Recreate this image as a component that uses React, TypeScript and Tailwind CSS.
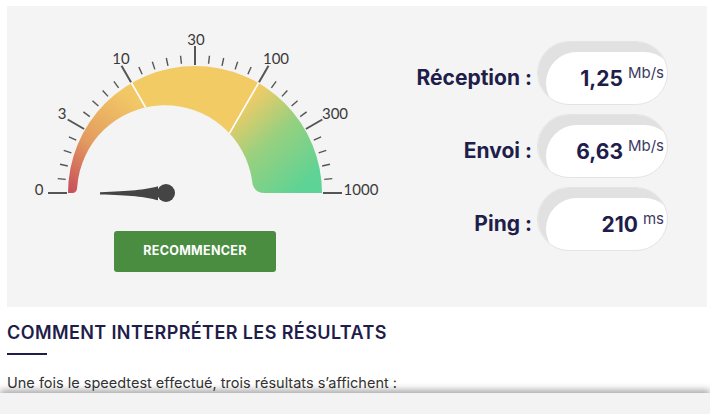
import React from "react";

const CX = 195;
const CY = 193;

const polar = (r: number, deg: number, cx = CX, cy = CY) => {
  const a = (deg * Math.PI) / 180;
  return [cx + r * Math.cos(a), cy - r * Math.sin(a)];
};

const wedge = (from: number, to: number) => {
  const [x1, y1] = polar(150, from);
  const [x2, y2] = polar(150, to);
  return `M ${CX} ${CY} L ${x1} ${y1} A 150 150 0 0 1 ${x2} ${y2} Z`;
};

const labels = [
  { t: "0", x: 39, y: 189 },
  { t: "3", x: 62, y: 113 },
  { t: "10", x: 121, y: 58 },
  { t: "30", x: 196, y: 39 },
  { t: "100", x: 276, y: 58 },
  { t: "300", x: 335, y: 113 },
  { t: "1000", x: 361, y: 189 },
];

const Gauge = () => {
  const band =
    "M 68 193 A 127 127 0 0 1 322 193 L 265 193 Q 253 193 252.1 180.8 A 88 88 0 0 0 77.2 186.9 Q 77 193 72 193 Z";

  return (
    <svg width="390" height="215" viewBox="7 6 390 215" className="block">
      <defs>
        <clipPath id="band">
          <path d={band} />
        </clipPath>
        <linearGradient id="red" gradientUnits="userSpaceOnUse" x1="70" y1="190" x2="135" y2="100">
          <stop offset="0" stopColor="#c8525b" />
          <stop offset="0.45" stopColor="#e39c5f" />
          <stop offset="1" stopColor="#f2c866" />
        </linearGradient>
        <linearGradient id="green" gradientUnits="userSpaceOnUse" x1="235" y1="110" x2="305" y2="185">
          <stop offset="0" stopColor="#f1cb66" />
          <stop offset="0.45" stopColor="#98d07f" />
          <stop offset="1" stopColor="#5dd395" />
        </linearGradient>
      </defs>

      <g clipPath="url(#band)">
        <path d={wedge(180, 120)} fill="url(#red)" />
        <path d={wedge(120, 60)} fill="#f3cb65" />
        <path d={wedge(60, 0)} fill="url(#green)" />
        {[120, 60].map((d) => {
          const [x1, y1] = polar(60, d);
          const [x2, y2] = polar(140, d);
          return <line key={d} x1={x1} y1={y1} x2={x2} y2={y2} stroke="#ffffff" strokeWidth="1.6" />;
        })}
      </g>

      {/* ticks */}
      {Array.from({ length: 31 }).map((_, i) => {
        const d = 180 - i * 6;
        const major = i % 5 === 0;
        const [x1, y1] = polar(major ? 128 : 130, d);
        const [x2, y2] = polar(major ? 147 : 138, d);
        return (
          <line
            key={i}
            x1={x1}
            y1={y1}
            x2={x2}
            y2={y2}
            stroke="#555555"
            strokeWidth={major ? 2 : 1.4}
          />
        );
      })}

      {labels.map((l) => (
        <text
          key={l.t}
          x={l.x}
          y={l.y}
          textAnchor="middle"
          dominantBaseline="central"
          fontFamily="Lato, sans-serif"
          fontSize="15"
          fill="#3a3a3a"
        >
          {l.t}
        </text>
      ))}

      {/* needle */}
      <path
        d="M 100 192.2 C 130 191.2, 145 190, 158 186.3 L 158 200.3 C 145 196.6, 130 195.2, 100 194.4 Z"
        fill="#444444"
      />
      <circle cx="166" cy="193" r="9" fill="#444444" />
    </svg>
  );
};

const Result = ({ label, value, unit }: { label: string; value: string; unit: string }) => (
  <div className="flex justify-end">
    <div className="mt-[26px] text-[21px] font-bold leading-none text-[#1f1d4a]">{label}</div>
    <div className="ml-[5px] flex h-[64px] w-[131px] items-center justify-end rounded-full border border-[#e4e4e4] bg-white pt-[10px] pr-[3px] shadow-[inset_8px_10px_0_#e1e1e1]">
      <span className="text-[21px] font-bold leading-none text-[#1f1d4a]">{value}</span>
      <span className="mb-[12px] ml-[5px] text-[15px] leading-none text-[#3c3a62]">{unit}</span>
    </div>
  </div>
);

export default function App() {
  return (
    <div className="min-h-[414px] bg-white px-[7px] pt-[6px] font-['Inter',sans-serif]">
      <div className="flex h-[301px] w-[700px] bg-[#f4f4f4]">
        <div className="w-[390px]">
          <Gauge />
          <button className="mt-[10px] ml-[107px] h-[41px] w-[162px] rounded-[3px] bg-[#4a8d40] text-[12.5px] font-bold tracking-[0.3px] text-white">
            RECOMMENCER
          </button>
        </div>
        <div className="flex flex-1 flex-col gap-[9px] pt-[35px] pr-[39px]">
          <Result label="Réception :" value="1,25" unit="Mb/s" />
          <Result label="Envoi :" value="6,63" unit="Mb/s" />
          <Result label="Ping :" value="210" unit="ms" />
        </div>
      </div>

      <h2 className="mt-[15px] text-[18px] font-semibold leading-[22px] tracking-[0.4px] text-[#1f1d4a]">
        COMMENT INTERPRÉTER LES RÉSULTATS
      </h2>
      <div className="mt-[9px] h-[2px] w-[40px] bg-[#1f1d4a]" />
      <p className="mt-[18px] text-[14.5px] leading-[20px] text-[#333333]">
        Une fois le speedtest effectué, trois résultats s’affichent :
      </p>

      <div className="fixed bottom-0 left-0 h-[21px] w-full bg-[#f3f3f3] shadow-[0_-3px_7px_rgba(0,0,0,0.35)]" />
    </div>
  );
}
